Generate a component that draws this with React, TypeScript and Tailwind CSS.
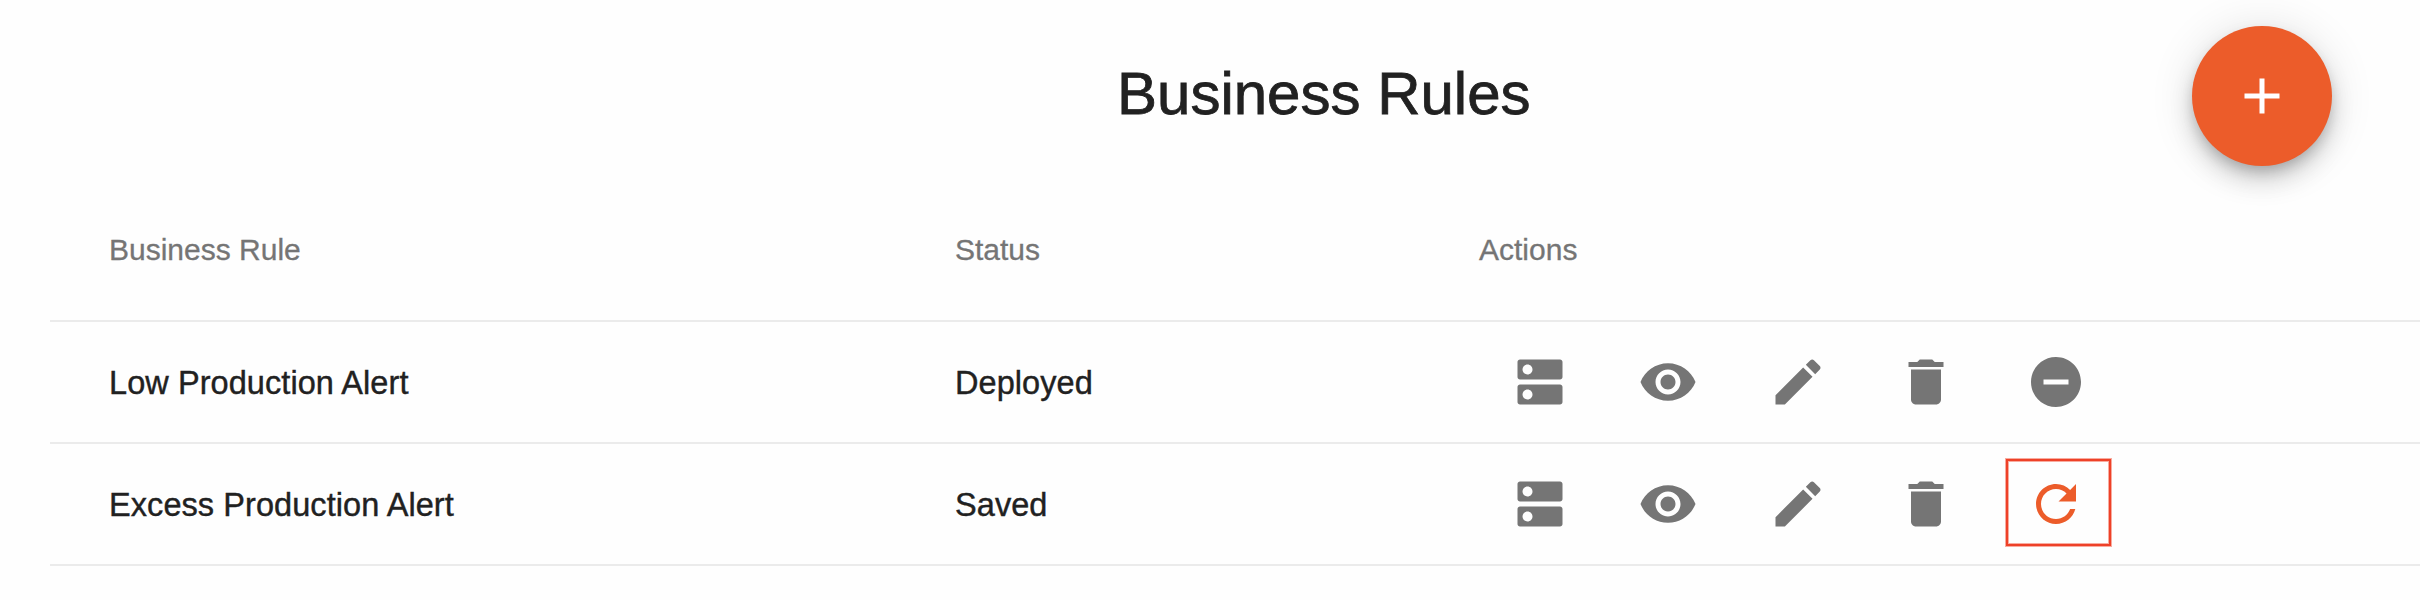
import React from "react";

const ICONS = {
  dns: "M20 13H4c-.55 0-1 .45-1 1v6c0 .55.45 1 1 1h16c.55 0 1-.45 1-1v-6c0-.55-.45-1-1-1zM7 19c-1.100 0-2-.9-2-2s.9-2 2-2 2 .9 2 2-.9 2-2 2zM20 3H4c-.55 0-1 .45-1 1v6c0 .55.45 1 1 1h16c.55 0 1-.45 1-1V4c0-.55-.45-1-1-1zM7 9c-1.100 0-2-.9-2-2s.9-2 2-2 2 .9 2 2-.9 2-2 2z",
  view: "M12 4.500C7 4.500 2.730 7.610 1 12c1.730 4.390 6 7.500 11 7.500s9.270-3.110 11-7.500c-1.730-4.390-6-7.500-11-7.500zM12 17c-2.760 0-5-2.240-5-5s2.240-5 5-5 5 2.240 5 5-2.240 5-5 5zm0-8c-1.660 0-3 1.340-3 3s1.340 3 3 3 3-1.340 3-3-1.340-3-3-3z",
  edit: "M3 17.250V21h3.750L17.810 9.940l-3.750-3.750L3 17.250zM20.710 7.040c.39-.39.39-1.020 0-1.410l-2.340-2.340c-.39-.39-1.020-.39-1.410 0l-1.830 1.830 3.750 3.750 1.830-1.830z",
  remove: "M6 19c0 1.100.9 2 2 2h8c1.100 0 2-.9 2-2V7H6v12zM19 4h-3.500l-1-1h-5l-1 1H5v2h14V4z",
  undeploy: "M12 2C6.480 2 2 6.480 2 12s4.480 10 10 10 10-4.480 10-10S17.520 2 12 2zm5 11H7v-2h10v2z",
  redeploy: "M17.650 6.350C16.200 4.900 14.210 4 12 4c-4.420 0-7.990 3.580-7.990 8s3.570 8 7.990 8c3.730 0 6.840-2.550 7.730-6h-2.080c-.82 2.330-3.040 4-5.650 4-3.310 0-6-2.690-6-6s2.690-6 6-6c1.660 0 3.140.69 4.220 1.780L13 11h7V4l-2.350 2.350z",
  add: "M19 13h-6v6h-2v-6H5v-2h6V5h2v6h6v2z",
};

function Icon({ name }: { name: keyof typeof ICONS }) {
  return (
    <svg viewBox="0 0 24 24" className="block size-[60px] shrink-0 fill-current">
      <path d={ICONS[name]} />
    </svg>
  );
}

const RULES = [
  { name: "Low Production Alert", status: "Deployed", deployed: true },
  { name: "Excess Production Alert", status: "Saved", deployed: false },
];

export default function App() {
  return (
    <div className="h-[600px] w-full overflow-hidden bg-[#fefefe] font-['Liberation_Sans',Arial,sans-serif] text-[#212121]">
      <header className="grid h-[200px] grid-cols-[1117px_1fr_228px] items-start">
        <div />
        <h1 className="pt-[59px] text-[60px] leading-[70px] [-webkit-text-stroke:0.8px_#212121]">Business Rules</h1>
        <div className="pt-[26px]">
          <button
            aria-label="Add business rule"
            className="flex size-[140px] items-center justify-center rounded-full bg-[#ec5c2a] text-white shadow-[0_7.5px_12.5px_-2.5px_rgba(0,0,0,0.2),0_15px_25px_0_rgba(0,0,0,0.14),0_2.5px_45px_0_rgba(0,0,0,0.12)]"
          >
            <Icon name="add" />
          </button>
        </div>
      </header>
      <main className="pl-[50px]">
        <div className="grid h-[122px] grid-cols-[846px_524px_1fr] border-b-2 border-[#ebebeb] pt-[33px] pl-[59px] text-[30px] leading-[34px] text-[#757575] [-webkit-text-stroke:0.3px_#757575]">
          <div>Business Rule</div>
          <div>Status</div>
          <div>Actions</div>
        </div>
        {RULES.map((rule) => (
          <div
            key={rule.name}
            className="grid h-[122px] grid-cols-[846px_555px_1fr] items-center border-b-2 border-[#ebebeb] pl-[59px] text-[32.5px] leading-[38px] tracking-[0.07px]"
          >
            <div className="pt-[2px] [-webkit-text-stroke:0.4px_#212121]">{rule.name}</div>
            <div className="pt-[2px] [-webkit-text-stroke:0.4px_#212121]">{rule.status}</div>
            <div className="flex items-center text-[#757575]">
              <Icon name="dns" />
              <span className="ml-[68px]"><Icon name="view" /></span>
              <span className="ml-[70px]"><Icon name="edit" /></span>
              <span className="ml-[68px]"><Icon name="remove" /></span>
              {rule.deployed ? (
                <span className="ml-[70px]"><Icon name="undeploy" /></span>
              ) : (
                <span className="-mt-[3px] ml-[50px] flex h-[87px] w-[105px] items-center border-2 border-[#ee4128] pt-[3px] pl-[18px] shadow-[0_0_0_1px_#f8ab9f,inset_0_0_0_1px_#f8ab9f]">
                  <span className="text-[#ec5c2a]"><Icon name="redeploy" /></span>
                </span>
              )}
            </div>
          </div>
        ))}
      </main>
    </div>
  );
}
